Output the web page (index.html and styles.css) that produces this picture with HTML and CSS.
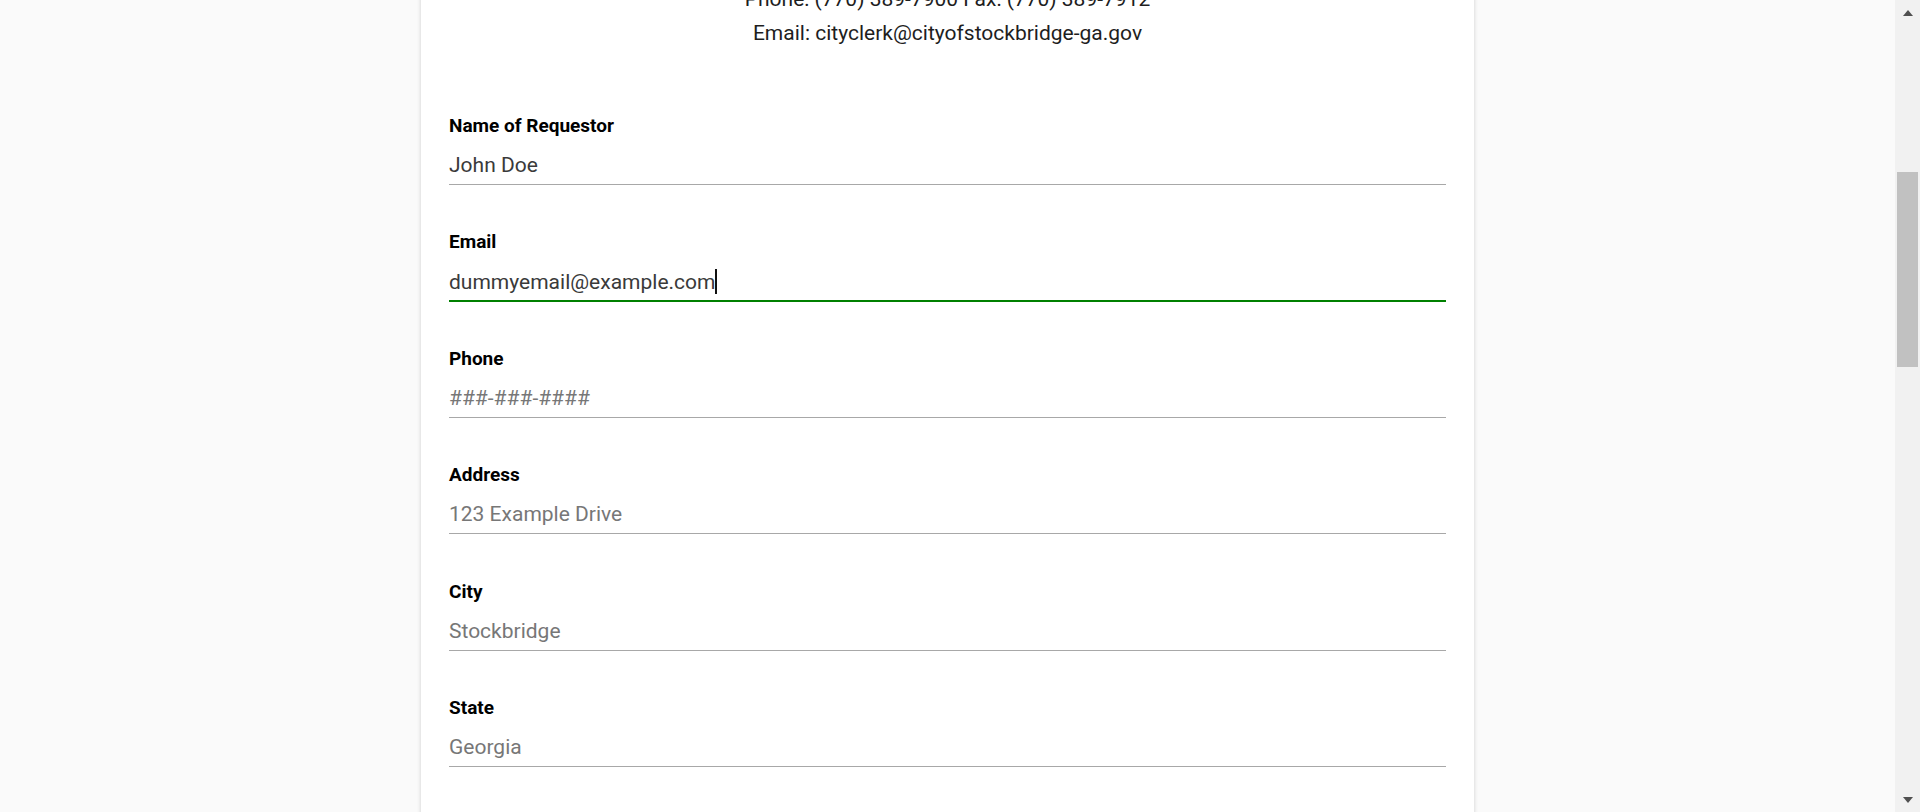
FILE: index.html
```html
<!DOCTYPE html>
<html lang="en">
<head>
<meta charset="utf-8">
<title>Open Records Request</title>
<link rel="stylesheet" href="styles.css">
</head>
<body>
<div class="window">
  <main class="main">
    <section class="card">
      <div class="contact">
        <p>Phone: (770) 389-7900 Fax: (770) 389-7912</p>
        <p>Email: cityclerk@cityofstockbridge-ga.gov</p>
      </div>
      <form class="form">
        <div class="field">
          <label class="label" for="name">Name of Requestor</label>
          <input class="input" id="name" type="text" value="John Doe">
        </div>
        <div class="field">
          <label class="label" for="email">Email</label>
          <div class="input input-focused" id="email"><span class="value">dummyemail@example.com</span><span class="caret"></span></div>
        </div>
        <div class="field">
          <label class="label" for="phone">Phone</label>
          <input class="input" id="phone" type="text" placeholder="###-###-####">
        </div>
        <div class="field">
          <label class="label" for="address">Address</label>
          <input class="input" id="address" type="text" placeholder="123 Example Drive">
        </div>
        <div class="field">
          <label class="label" for="city">City</label>
          <input class="input" id="city" type="text" placeholder="Stockbridge">
        </div>
        <div class="field">
          <label class="label" for="state">State</label>
          <input class="input" id="state" type="text" placeholder="Georgia">
        </div>
      </form>
    </section>
  </main>
  <div class="scrollbar">
    <div class="sb-btn"><span class="tri-up"></span></div>
    <div class="sb-track"><div class="sb-thumb"></div></div>
    <div class="sb-btn"><span class="tri-down"></span></div>
  </div>
</div>
</body>
</html>
```

FILE: styles.css
```css
* { box-sizing: border-box; }
html, body {
  margin: 0;
  padding: 0;
  height: 812px;
  overflow: hidden;
}
body {
  font-family: Roboto, "Liberation Sans", sans-serif;
  background: #fafafa;
}
.window {
  display: flex;
  height: 812px;
}
.main {
  flex: 1;
  overflow: hidden;
  background: #fafafa;
}
.card {
  width: 1053px;
  margin: 0 auto;
  min-height: 1200px;
  background: #fff;
  box-shadow: 0 0 4px rgba(0, 0, 0, 0.18);
  padding: 0 28px;
}
.contact {
  margin-top: -16.7px;
  text-align: center;
  font-size: 21px;
  line-height: 33.6px;
  color: #1e1e1e;
}
.contact p {
  margin: 0;
}
.form {
  display: flex;
  flex-direction: column;
  gap: 46.55px;
  margin-top: 64.2px;
}
.field {
  display: flex;
  flex-direction: column;
  gap: 9px;
}
.label {
  font-size: 19px;
  line-height: 22px;
  font-weight: 700;
  color: #000;
}
.input {
  display: block;
  width: 100%;
  height: 39px;
  padding: 0;
  margin: 0;
  border: none;
  border-bottom: 1px solid #a8a8a8;
  font-family: Roboto, "Liberation Sans", sans-serif;
  font-size: 21px;
  color: #3a3a3a;
  background: transparent;
  outline: none;
}
.input::placeholder {
  color: #777;
}
.input-focused {
  display: flex;
  align-items: center;
  height: 40px;
  margin-bottom: -1px;
  padding-top: 1px;
  border-bottom: 2px solid #008000;
  line-height: normal;
}
.caret {
  display: inline-block;
  width: 2px;
  height: 25px;
  background: #111;
}
.scrollbar {
  width: 25px;
  flex: none;
  background: #f1f1f1;
  display: flex;
  flex-direction: column;
}
.sb-btn {
  height: 25px;
  display: flex;
  align-items: center;
  justify-content: center;
  flex: none;
}
.tri-up {
  width: 0;
  height: 0;
  border-left: 5.5px solid transparent;
  border-right: 5.5px solid transparent;
  border-bottom: 6px solid #505050;
}
.tri-down {
  width: 0;
  height: 0;
  border-left: 5.5px solid transparent;
  border-right: 5.5px solid transparent;
  border-top: 6px solid #505050;
}
.sb-track {
  flex: 1;
  padding: 147px 2px 0 2px;
}
.sb-thumb {
  height: 195px;
  background: #c1c1c1;
}
```
